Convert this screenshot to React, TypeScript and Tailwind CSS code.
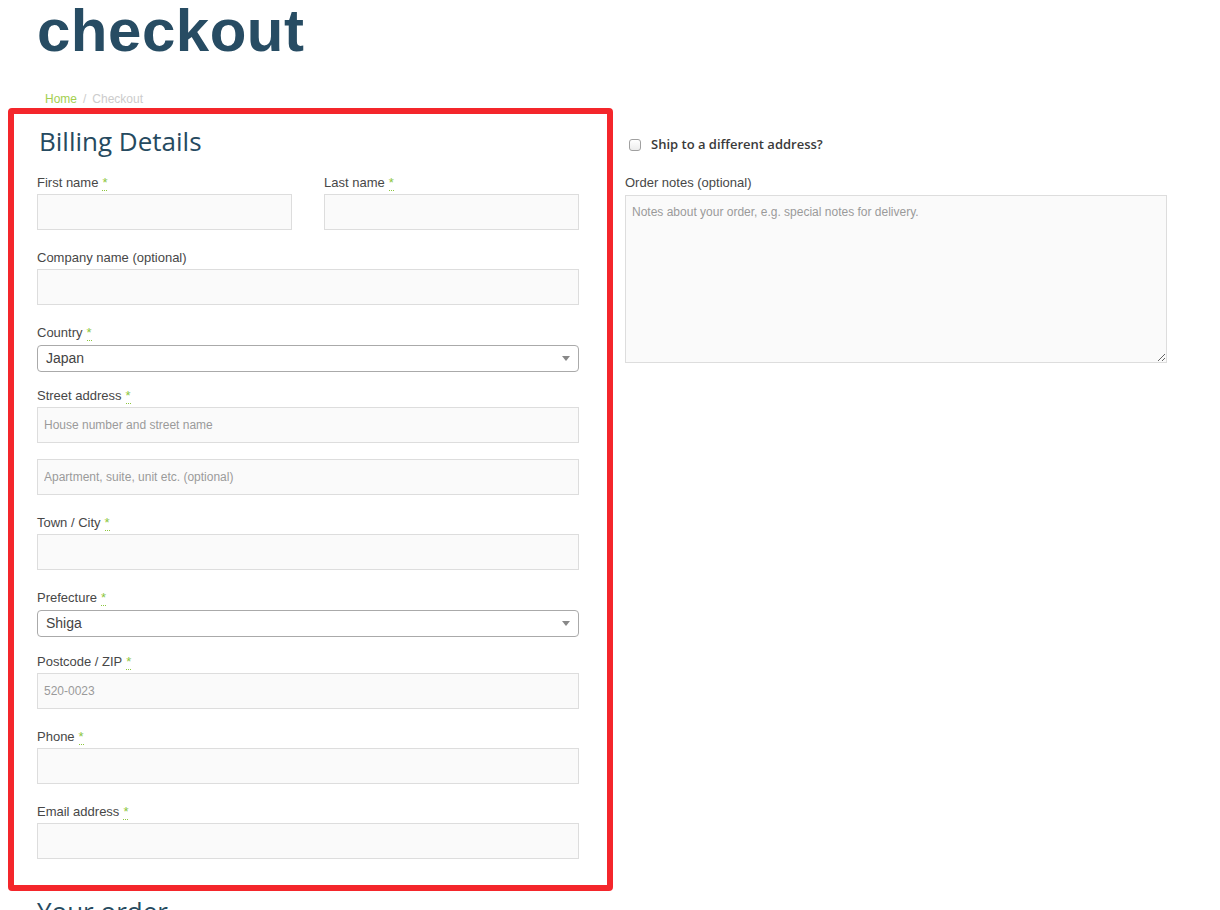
import { FC } from 'react';

const sans = "font-['Liberation_Sans',Arial,sans-serif]";
const open = "font-['Open_Sans','Noto_Sans',sans-serif]";

const Req = () => (
  <abbr
    title="required"
    className="ml-[4px] text-[#8cc63e] no-underline border-b border-dotted border-[#8cc63e] leading-none"
  >
    *
  </abbr>
);

const Label: FC<{ text: string; optional?: boolean; required?: boolean }> = ({ text, optional, required }) => (
  <label className="block h-[20px] pt-[1px] leading-[20px] text-[13px] text-[#474747]">
    {text}
    {optional && <span> (optional)</span>}
    {required && <Req />}
  </label>
);

const TextInput: FC<{ placeholder?: string; className?: string }> = ({ placeholder, className = '' }) => (
  <input
    placeholder={placeholder}
    className={`block w-full h-[36px] bg-[#fafafa] border border-[#dddddd] px-[6px] text-[12px] text-[#444] placeholder:text-[#9a9a9a] outline-none ${className}`}
  />
);

const SelectBox: FC<{ value: string }> = ({ value }) => (
  <div className="mt-[3px] h-[27px] flex items-center justify-between border border-[#aaaaaa] rounded-[4px] bg-white pl-[8px] pr-[8px]">
    <span className="text-[14px] text-[#444]">{value}</span>
    <span className="w-0 h-0 border-l-[4px] border-r-[4px] border-t-[5px] border-l-transparent border-r-transparent border-t-[#888]" />
  </div>
);

const App: FC = () => {
  return (
    <div className={`bg-white min-h-[910px] h-[910px] overflow-hidden ${sans}`}>
      <h1 className="ml-[37px] pt-[1px] text-[60px] leading-[60px] font-bold text-[#274c63] tracking-[0.5px]">checkout</h1>

      {/* Breadcrumb */}
      <nav className="mt-[31px] pl-[45px] text-[12px] leading-[14px] text-[#cccccc]">
        <span className="text-[#a3cf4f]">Home</span>
        <span className="mx-[6px]">/</span>
        <span>Checkout</span>
      </nav>

      <div className="flex items-start pl-[8px] mt-[2px]">
        {/* Billing */}
        <div className="w-[605px] border-[6px] border-[#f4262b] rounded-[4px] pl-[23px] pr-[28px] pt-[11px] pb-[26px]">
          <h3 className={`${open} ml-[2px] text-[26px] leading-[32px] text-[#264a60]`}>Billing Details</h3>

          <div className="mt-[15px] flex gap-[32px]">
            <div className="flex-1">
              <Label text="First name" required />
              <TextInput className="mt-[2px]" />
            </div>
            <div className="flex-1">
              <Label text="Last name" required />
              <TextInput className="mt-[2px]" />
            </div>
          </div>

          <div className="mt-[17px]">
            <Label text="Company name" optional />
            <TextInput className="mt-[2px]" />
          </div>

          <div className="mt-[17px]">
            <Label text="Country" required />
            <SelectBox value="Japan" />
          </div>

          <div className="mt-[13px]">
            <Label text="Street address" required />
            <TextInput className="mt-[2px]" placeholder="House number and street name" />
            <TextInput className="mt-[16px]" placeholder="Apartment, suite, unit etc. (optional)" />
          </div>

          <div className="mt-[17px]">
            <Label text="Town / City" required />
            <TextInput className="mt-[2px]" />
          </div>

          <div className="mt-[17px]">
            <Label text="Prefecture" required />
            <SelectBox value="Shiga" />
          </div>

          <div className="mt-[14px]">
            <Label text="Postcode / ZIP" required />
            <TextInput className="mt-[2px]" placeholder="520-0023" />
          </div>

          <div className="mt-[17px]">
            <Label text="Phone" required />
            <TextInput className="mt-[2px]" />
          </div>

          <div className="mt-[17px]">
            <Label text="Email address" required />
            <TextInput className="mt-[2px]" />
          </div>
        </div>

        {/* Shipping / notes */}
        <div className="ml-[12px] w-[542px] pt-[28px]">
          <label className="flex items-center h-[18px] pl-[4px]">
            <span className="w-[12px] h-[12px] border border-[#a0a0a0] rounded-[3px] bg-gradient-to-b from-white to-[#ececec]" />
            <span className={`${open} ml-[10px] text-[13px] font-semibold text-[#3a3a3a]`}>Ship to a different address?</span>
          </label>

          <div className="mt-[18px]">
            <Label text="Order notes" optional />
            <textarea
              placeholder="Notes about your order, e.g. special notes for delivery."
              className="block mt-[3px] w-full h-[168px] bg-[#fafafa] border border-[#dddddd] px-[6px] py-[8px] text-[12px] leading-[16px] text-[#444] placeholder:text-[#9a9a9a] outline-none"
            />
          </div>
        </div>
      </div>

      <h3 className={`${open} ml-[37px] mt-[3px] text-[26px] leading-[34px] text-[#264a60]`}>Your order</h3>
    </div>
  );
};

export default App;
